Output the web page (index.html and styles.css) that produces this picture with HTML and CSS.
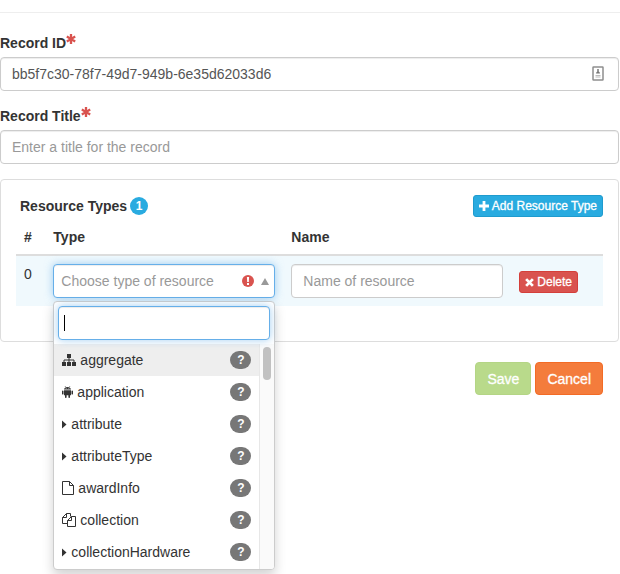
FILE: index.html
```html
<!DOCTYPE html>
<html lang="en">
<head>
<meta charset="utf-8">
<meta name="viewport" content="width=device-width, initial-scale=1">
<title>Record</title>
<link rel="stylesheet" href="styles.css">
</head>
<body>
<svg class="sprite" aria-hidden="true">
  <symbol id="asterisk" viewBox="0 0 10 10"><path d="M5 0v10M.8 2.600l8.400 4.800M.8 7.400l8.400-4.800" stroke="currentColor" stroke-width="2.300"/></symbol>
  <symbol id="caret" viewBox="0 0 5 9"><path d="M0 0.500L4.500 4.500 0 8.500z" fill="currentColor"/></symbol>
</svg>
<form class="record">
  <hr class="rule">
  <div class="field">
    <label for="rid">Record ID<svg class="required"><use href="#asterisk"/></svg></label>
    <div class="input-wrap">
      <input class="control" id="rid" type="text" value="bb5f7c30-78f7-49d7-949b-6e35d62033d6">
      <svg class="autofill" viewBox="0 0 12 15" aria-hidden="true"><rect x="1" y="1" width="10" height="13" rx="0.500" fill="#fff" stroke="#8e8e8e" stroke-width="1.500"/><path d="M6 3v3" stroke="#777" stroke-width="1.500"/><path d="M4 7.500a2 2 0 0 1 4 0z" fill="#777"/><path d="M3.500 9.500h5M3.500 11h5" stroke="#bbb"/></svg>
    </div>
  </div>
  <div class="field">
    <label for="title">Record Title<svg class="required"><use href="#asterisk"/></svg></label>
    <input class="control" id="title" type="text" placeholder="Enter a title for the record">
  </div>

  <section class="panel">
    <div class="panel-head">
      <h2>Resource Types <span class="count">1</span></h2>
      <button class="btn small info" type="button"><svg class="plus" viewBox="0 0 9 9"><path d="M4.500 0v9M0 4.500h9" stroke="currentColor" stroke-width="2.500"/></svg> Add Resource Type</button>
    </div>
    <table>
      <thead><tr><th class="col-index">#</th><th class="col-type">Type</th><th class="col-name">Name</th><th></th></tr></thead>
      <tbody>
        <tr>
          <td>0</td>
          <td>
            <div class="picker">
              <button class="control toggle" type="button" aria-haspopup="listbox" aria-expanded="true">
                <span class="hint">Choose type of resource</span>
                <svg class="alert" viewBox="0 0 12 12"><circle cx="6" cy="6" r="6" fill="#d9534f"/><path d="M4.900 2h2.200L6.800 7H5.200zM5 8h2v2H5z" fill="#fff"/></svg>
                <svg class="up" viewBox="0 0 8 7"><path d="M4 0l4 7H0z" fill="#999"/></svg>
              </button>
              <div class="menu">
                <div class="search"><input class="control" type="text" aria-label="Search resource types"><span class="cursor"></span></div>
                <div class="scroller">
                  <ul role="listbox" aria-label="Resource types">
                    <li class="active" role="option" aria-selected="true"><svg class="icon w14" viewBox="0 0 14 12"><path d="M5 0h4v4H5zM0 8h4v4H0zM5 8h4v4H5zM10 8h4v4h-4z" fill="currentColor"/><path d="M7 4v4M2 8.500V6h10v2.500" fill="none" stroke="currentColor"/></svg><span>aggregate</span><span class="help">?</span></li>
                    <li role="option"><svg class="icon w11" viewBox="0 0 11 12"><path d="M2 3.600C2.200 0 8.800 0 9 3.600zM2 4.200h7v5H8v2a.8.8 0 0 1-1.600 0v-2H4.600v2a.8.8 0 0 1-1.600 0v-2H2zM0 5a.8.8 0 0 1 1.500 0v3A.8.8 0 0 1 0 8zM9.500 5A.8.8 0 0 1 11 5v3a.8.8 0 0 1-1.500 0z" fill="currentColor"/><path d="M3 0l1 1.600M8 0L7 1.600" stroke="currentColor" stroke-width=".5"/><circle cx="4.100" cy="2.500" r=".4" fill="#fff"/><circle cx="6.900" cy="2.500" r=".4" fill="#fff"/></svg><span>application</span><span class="help">?</span></li>
                    <li role="option"><svg class="icon w5"><use href="#caret"/></svg><span>attribute</span><span class="help">?</span></li>
                    <li role="option"><svg class="icon w5"><use href="#caret"/></svg><span>attributeType</span><span class="help">?</span></li>
                    <li role="option"><svg class="icon w12" viewBox="0 0 12 14"><path d="M.5.5h7l4 4v9H.5zM7.500.5v4h4" fill="none" stroke="currentColor"/></svg><span>awardInfo</span><span class="help">?</span></li>
                    <li role="option"><svg class="icon w14" viewBox="0 0 14 14"><path d="M5.500 10.500h-5v-6l4-4h4v3M4.500.5v4h-4M5.500 7.500l4-4h4v10h-8zM9.500 3.500v4h-4" fill="none" stroke="currentColor"/></svg><span>collection</span><span class="help">?</span></li>
                    <li role="option"><svg class="icon w5"><use href="#caret"/></svg><span>collectionHardware</span><span class="help">?</span></li>
                  </ul>
                  <div class="track"><div class="thumb"></div></div>
                </div>
              </div>
            </div>
          </td>
          <td><input class="control" type="text" placeholder="Name of resource" aria-label="Name of resource"></td>
          <td class="action"><button class="btn small danger" type="button"><svg class="cross" viewBox="0 0 8 8"><path d="M1 1l6 6M7 1L1 7" stroke="currentColor" stroke-width="2.500"/></svg> Delete</button></td>
        </tr>
      </tbody>
    </table>
  </section>
  <div class="actions">
    <button class="btn save" type="button">Save</button>
    <button class="btn cancel" type="button">Cancel</button>
  </div>
</form>
</body>
</html>
```
FILE: styles.css
```css
* { box-sizing: border-box; }
body {
  min-height: 100vh;
  margin: 0;
  background: #fff;
  color: #333;
  font: 14px/20px "Liberation Sans", Arial, sans-serif;
}
svg { overflow: visible; }
.sprite { position: absolute; width: 0; height: 0; }
.record { padding: 12px 1px 0 0; }
.rule { margin: 0 -1px 20px 0; border: 0; border-top: 1px solid #eee; }
.field { margin-bottom: 15px; }
.field label { display: block; margin-bottom: 4px; font-weight: bold; }
.required { width: 10px; height: 10px; color: #d9534f; vertical-align: 4px; }
.control {
  display: block;
  width: 100%;
  height: 34px;
  padding: 6px 11px;
  border: 1px solid #ccc;
  border-radius: 4px;
  background: #fff;
  box-shadow: inset 0 1px 1px rgba(0, 0, 0, .075);
  color: #555;
  font: inherit;
  outline: 0;
}
.control::placeholder { color: #999; opacity: 1; }
.input-wrap { position: relative; }
.autofill { position: absolute; right: 15px; top: 9px; width: 12px; height: 15px; }

.panel { padding: 15px 15px 35px; border: 1px solid #ddd; border-radius: 4px; }
.panel-head { display: flex; align-items: center; justify-content: space-between; height: 22px; padding-left: 4px; }
h2 { display: flex; align-items: center; gap: 3px; margin: 0; font-size: 14px; line-height: 20px; }
.count, .help {
  border-radius: 10px;
  color: #fff;
  font-size: 12px;
  font-weight: bold;
  line-height: 18px;
  text-align: center;
}
.count { width: 18px; background: #29abe0; }
.btn {
  padding: 6px 12px;
  border: 1px solid;
  border-radius: 4px;
  color: #fff;
  font: inherit;
  -webkit-text-stroke: 0.3px #fff;
}
.small { display: flex; align-items: center; gap: 3px; height: 22px; padding: 0 5px; border-radius: 3px; font-size: 12px; line-height: 18px; white-space: nowrap; }
.info { background: #29abe0; border-color: #1f9bce; }
.danger { background: #d9534f; border-color: #d43f3a; }
.plus { width: 10px; height: 10px; }
.cross { width: 9px; height: 9px; }

table { width: 100%; border-collapse: separate; border-spacing: 0; table-layout: fixed; }
th { height: 39px; padding: 8px 8px 7px; border-bottom: 2px solid #ddd; text-align: left; vertical-align: bottom; }
th:first-child { padding-right: 0; }
.col-index { width: 5%; }
.col-type { width: 238px; }
.col-name { width: 228px; }
td { padding: 8px; background: #f0f9fd; vertical-align: top; }
.action { vertical-align: middle; }
.action .btn { margin-top: 2px; }

.picker { position: relative; }
.toggle { display: flex; align-items: center; padding: 6px 5px 6px 7px; color: #999; }
.toggle, .search .control { border-color: #66afe9; box-shadow: inset 0 1px 1px rgba(0, 0, 0, .075), 0 0 8px rgba(102, 175, 233, .6); }
.hint { flex: 1; text-align: left; white-space: nowrap; }
.alert { width: 12px; height: 12px; margin-right: 7px; }
.up { width: 8px; height: 7px; }
.menu {
  position: absolute;
  z-index: 2;
  top: 37px;
  left: 0;
  width: 100%;
  border: 1px solid #ccc;
  border-radius: 4px;
  background: #fff;
  box-shadow: 0 6px 12px rgba(0, 0, 0, .175);
}
.search { position: relative; padding: 4px; }
.cursor { position: absolute; left: 10px; top: 13px; width: 1px; height: 16px; background: #000; }
.scroller { display: flex; }
ul { flex: 1; margin: 0; padding: 0 0 1px; list-style: none; }
li { display: flex; align-items: center; gap: 4px; height: 32px; padding: 0 8px; }
.active { background: #eee; }
.icon { flex: none; color: #333; }
.w14 { width: 14px; height: 14px; }
.w12 { width: 12px; height: 14px; }
.w11 { width: 11px; height: 12px; }
.w5 { width: 5px; height: 9px; }
.help { width: 21px; margin-left: auto; background: #777; }
.track { width: 15px; padding: 3px; border-left: 1px solid #e7e7e7; border-radius: 0 0 3px 0; background: #fafafa; }
.thumb { width: 8px; height: 33px; border-radius: 4px; background: #c1c1c1; }

.actions { display: flex; justify-content: flex-end; gap: 4px; padding: 20px 16px 0 0; }
.actions .btn { height: 33px; padding: 5px 11px; }
.save { background: #b9da8b; border-color: #b4d585; }
.cancel { background: #f47c3c; border-color: #f36b25; }
```
